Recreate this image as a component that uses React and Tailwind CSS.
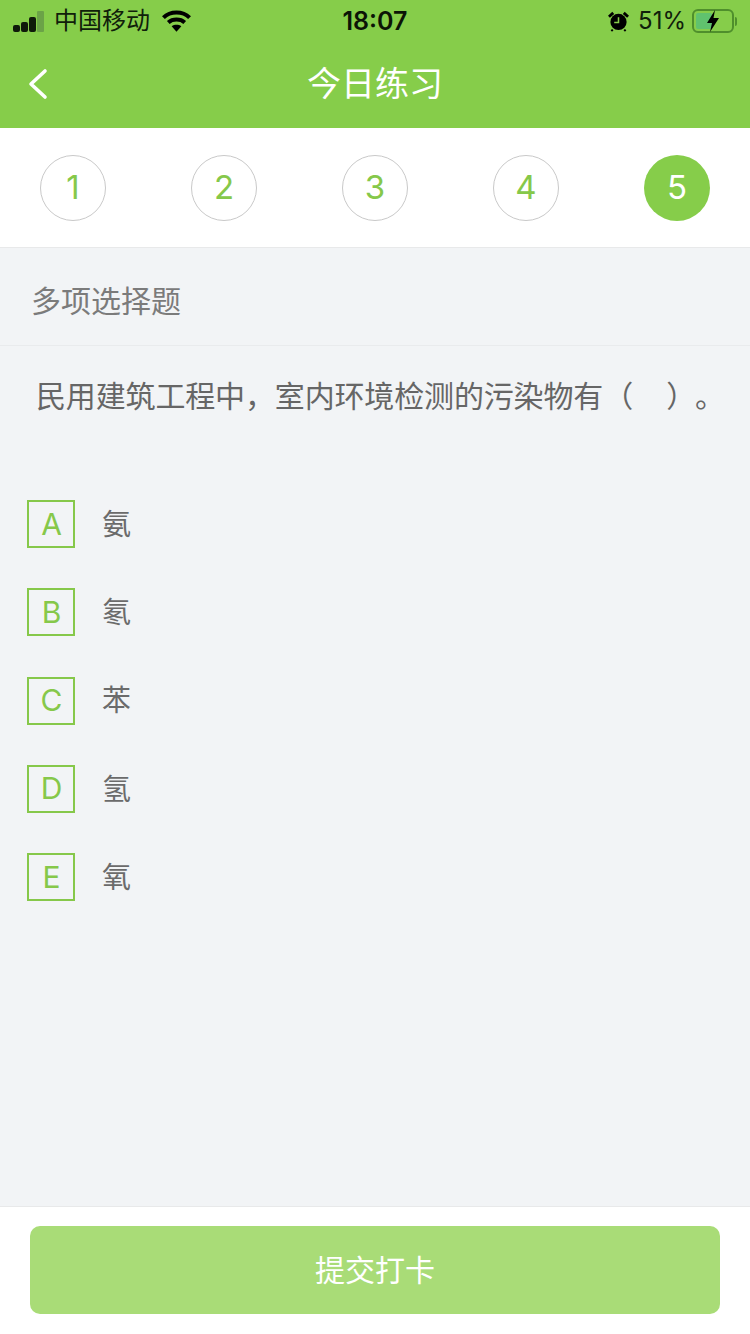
const cjk = "font-['Inter','Noto_Sans_CJK_SC',sans-serif]";

const options = [
  { key: "A", text: "氨" },
  { key: "B", text: "氡" },
  { key: "C", text: "苯" },
  { key: "D", text: "氢" },
  { key: "E", text: "氧" },
];

const steps = [1, 2, 3, 4, 5];

function StatusBar() {
  return (
    <div className="flex h-10 items-center justify-between px-[13px] pt-[2px] text-[#10200a]">
      <div className="flex w-[250px] items-center">
        <div className="flex items-end gap-[1px]">
          <span className="h-[7px] w-[7px] rounded-[2px] bg-[#0f1a0a]" />
          <span className="h-[10px] w-[7px] rounded-[2px] bg-[#0f1a0a]" />
          <span className="h-[15px] w-[7px] rounded-[2px] bg-[#0f1a0a]" />
          <span className="h-[21px] w-[7px] rounded-[1px] bg-[#6ba347]" />
        </div>
        <span className="ml-[10px] text-[24px] leading-none">中国移动</span>
        <svg className="ml-[12px]" width="29" height="22" viewBox="0 0 30 22">
          <path d="M1.5 7.5C8.5 0.5 21.5 0.5 28.5 7.5" fill="none" stroke="#000" strokeWidth="4.2" />
          <path d="M6.5 12.5C11 8.5 19 8.5 23.5 12.5" fill="none" stroke="#000" strokeWidth="4.2" />
          <path d="M10 16.5L15 22 20 16.5C17 14.5 13 14.5 10 16.5Z" fill="#000" />
        </svg>
      </div>
      <span className="text-[25px] font-semibold leading-none text-[#0b1406]">18:07</span>
      <div className="flex w-[250px] items-center justify-end">
        <svg width="21" height="22" viewBox="0 0 22 22">
          <circle cx="11" cy="12" r="8.5" fill="#000" />
          <path d="M11 7v5.5H6.5" fill="none" stroke="#86cd4a" strokeWidth="1.6" />
          <path d="M1 6.5 5.5 2.5M21 6.5 16.5 2.5" stroke="#000" strokeWidth="3" />
          <path d="M5 20l-1.5 1.5M17 20l1.5 1.5" stroke="#000" strokeWidth="2" />
        </svg>
        <span className="ml-[9px] text-[24px] leading-none">51%</span>
        <div className="relative ml-[6px] h-[24px] w-[42px] rounded-[6px] border-2 border-[#4f8f2c] p-[2px]">
          <div className="h-full w-[16px] rounded-[2px] bg-[#60c26e]" />
          <svg className="absolute left-[10px] top-[-2px]" width="18" height="24" viewBox="0 0 18 24">
            <path d="M11 1 3 14h5l-2 9 9-14H9.5Z" fill="#000" />
          </svg>
        </div>
        <span className="ml-[1px] h-[9px] w-[2px] rounded-r-sm bg-[#4f8f2c]" />
      </div>
    </div>
  );
}

export default function App() {
  return (
    <div className={`flex h-[1334px] w-[750px] flex-col overflow-hidden bg-[#f2f4f6] ${cjk}`}>
      <div className="h-[128px] bg-[#86cd4a]">
        <StatusBar />
        <div className="relative flex h-[88px] items-center justify-center">
          <svg
            className="absolute left-[27px] top-[28px]"
            width="22"
            height="32"
            viewBox="0 0 22 32"
            fill="none"
            stroke="#fff"
            strokeWidth="3.6"
            strokeLinecap="round"
            strokeLinejoin="round"
          >
            <path d="M18 3 4 16l14 13" />
          </svg>
          <span className="text-[34px] leading-none text-white">今日练习</span>
        </div>
      </div>

      <div className="flex h-[120px] items-center justify-between border-b border-[#e8e9ea] bg-white px-[40px]">
        {steps.map((n) =>
          n === 5 ? (
            <div
              key={n}
              className="flex h-[66px] w-[66px] items-center justify-center rounded-full bg-[#86cd4a] text-[33px] text-white"
            >
              {n}
            </div>
          ) : (
            <div
              key={n}
              className="flex h-[66px] w-[66px] items-center justify-center rounded-full border border-[#c9c9c9] text-[33px] text-[#86c84a]"
            >
              {n}
            </div>
          )
        )}
      </div>

      <div className="flex h-[98px] items-center border-b border-[#e9ebed] pl-[31px] pt-[10px] text-[30px] text-[#7b7b7b]">
        多项选择题
      </div>

      <div className="flex-1">
        <p className="pl-[36px] pt-[29px] text-[30px] leading-[42px] tracking-[-0.15px] text-[#666]">
          民用建筑工程中，室内环境检测的污染物有（&nbsp;&nbsp;&nbsp;&nbsp;）<span className="ml-[14px]">。</span>
        </p>
        <div className="mt-[83px] flex flex-col gap-[40.25px] pl-[27px]">
          {options.map((o) => (
            <div key={o.key} className="flex items-center">
              <div className="flex h-[48px] w-[48px] items-center justify-center border-2 border-[#86c84a] pl-[1px] text-[30px] text-[#86c84a]">
                {o.key}
              </div>
              <span className="ml-[27px] pt-[1px] text-[29px] text-[#6b6b6b]">{o.text}</span>
            </div>
          ))}
        </div>
      </div>

      <div className="h-[128px] border-t border-[#e8e9ea] bg-white px-[30px] pt-[19px]">
        <button className="h-[88px] w-full rounded-[10px] bg-[#a9dc77] text-[30px] text-white">
          提交打卡
        </button>
      </div>
    </div>
  );
}
